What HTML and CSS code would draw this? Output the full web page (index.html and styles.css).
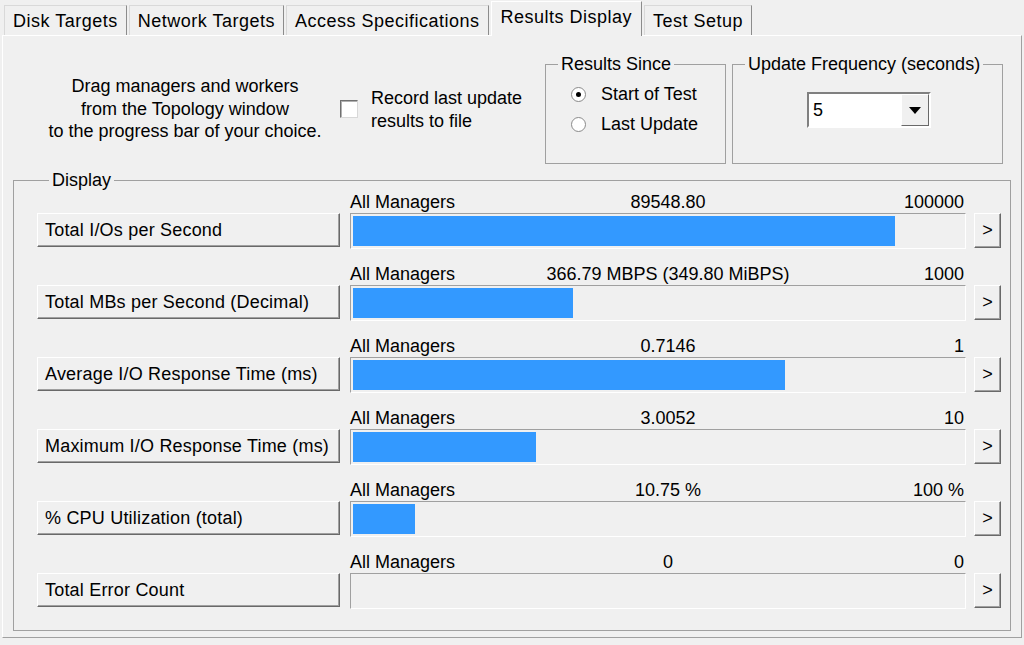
FILE: index.html
```html
<!DOCTYPE html>
<html lang="en">
<head>
    <meta charset="UTF-8">
    <title>Results Display</title>
    <link rel="stylesheet" href="styles.css">
</head>
<body>

<div class="tabs">
    <div class="tab">Disk Targets</div>
    <div class="tab">Network Targets</div>
    <div class="tab">Access Specifications</div>
    <div class="tab active">Results Display</div>
    <div class="tab">Test Setup</div>
</div>

<div class="panel">

    <div class="top">
        <p class="hint">Drag managers and workers<br>from the Topology window<br>to the progress bar of your choice.</p>

        <label class="record">
            <span class="checkbox"></span>
            <span>Record last update<br>results to file</span>
        </label>

        <fieldset class="group since">
            <legend>Results Since</legend>
            <div class="radio-row"><span class="radio checked"></span>Start of Test</div>
            <div class="radio-row"><span class="radio"></span>Last Update</div>
        </fieldset>

        <fieldset class="group freq">
            <legend>Update Frequency (seconds)</legend>
            <div class="combo">
                <span class="combo-value">5</span>
                <span class="combo-btn"><svg width="12" height="7" viewBox="0 0 12 7"><path d="M0 0h12L6 7z" fill="#000"/></svg></span>
            </div>
        </fieldset>
    </div>

    <fieldset class="group display">
        <legend>Display</legend>

        <div class="row">
            <button class="metric">Total I/Os per Second</button>
            <div class="meter">
                <div class="meter-labels"><span>All Managers</span><span class="mid">89548.80</span><span class="max">100000</span></div>
                <div class="bar"><div class="fill" style="width:88.9%"></div></div>
            </div>
            <button class="more">&gt;</button>
        </div>

        <div class="row">
            <button class="metric">Total MBs per Second (Decimal)</button>
            <div class="meter">
                <div class="meter-labels"><span>All Managers</span><span class="mid">366.79 MBPS (349.80 MiBPS)</span><span class="max">1000</span></div>
                <div class="bar"><div class="fill" style="width:36%"></div></div>
            </div>
            <button class="more">&gt;</button>
        </div>

        <div class="row">
            <button class="metric">Average I/O Response Time (ms)</button>
            <div class="meter">
                <div class="meter-labels"><span>All Managers</span><span class="mid">0.7146</span><span class="max">1</span></div>
                <div class="bar"><div class="fill" style="width:70.8%"></div></div>
            </div>
            <button class="more">&gt;</button>
        </div>

        <div class="row">
            <button class="metric">Maximum I/O Response Time (ms)</button>
            <div class="meter">
                <div class="meter-labels"><span>All Managers</span><span class="mid">3.0052</span><span class="max">10</span></div>
                <div class="bar"><div class="fill" style="width:30%"></div></div>
            </div>
            <button class="more">&gt;</button>
        </div>

        <div class="row">
            <button class="metric">% CPU Utilization (total)</button>
            <div class="meter">
                <div class="meter-labels"><span>All Managers</span><span class="mid">10.75 %</span><span class="max">100 %</span></div>
                <div class="bar"><div class="fill" style="width:10.2%"></div></div>
            </div>
            <button class="more">&gt;</button>
        </div>

        <div class="row">
            <button class="metric">Total Error Count</button>
            <div class="meter">
                <div class="meter-labels"><span>All Managers</span><span class="mid">0</span><span class="max">0</span></div>
                <div class="bar"><div class="fill" style="width:0"></div></div>
            </div>
            <button class="more">&gt;</button>
        </div>
    </fieldset>

</div>

</body>
</html>
```

FILE: styles.css
```css
body {
    margin: 0;
    width: 1024px;
    height: 645px;
    overflow: hidden;
    background-color: #f0f0f0;
    font-family: "Liberation Sans", Arial, sans-serif;
    font-size: 18px;
    color: #000;
}

/* tab strip */
.tabs {
    display: flex;
    align-items: flex-end;
    height: 35px;
    padding-left: 4px;
    position: relative;
    z-index: 1;
}
.tab {
    height: 29px;
    line-height: 30px;
    padding: 0 8px;
    margin-right: 2px;
    letter-spacing: 0.5px;
    border: 1px solid #d9d9d9;
    border-right-color: #8c8c8c;
    border-bottom: none;
    background-color: #f0f0f0;
    white-space: nowrap;
}
.tab.active {
    height: 34px;
    line-height: 30px;
    margin-bottom: -1px;
    padding: 0 9px;
    border-color: #fff;
    border-right-color: #8c8c8c;
}

.panel {
    height: 601px;
    margin: 0 2px;
    border: 1px solid;
    border-color: #fff #a0a0a0 #a0a0a0 #fff;
}

/* upper options */
.top {
    display: flex;
    align-items: flex-start;
    height: 133px;
}
.hint {
    width: 306px;
    margin: 39px 0 0 29px;
    line-height: 22.5px;
    text-align: center;
}
.record {
    display: flex;
    align-items: flex-start;
    gap: 13px;
    width: 205px;
    margin-left: 2px;
    line-height: 23px;
}
.record span:last-child {
    margin-top: 51px;
}
.checkbox {
    width: 16px;
    height: 16px;
    margin-top: 64px;
    background-color: #fff;
    border: 1px solid;
    border-color: #707070 #d8d8d8 #d8d8d8 #707070;
    box-shadow: inset 1px 1px #b0b0b0;
}

.group {
    margin: 0;
    padding: 0;
    min-width: 0;
    border: 1px solid #a0a0a0;
}
.group legend {
    padding: 0 3px;
    line-height: 22px;
}
.since, .freq {
    margin-top: 17px;
    height: 111px;
    box-sizing: border-box;
}
.since {
    width: 181px;
    padding: 4px 0 0 25px;
}
.since legend {
    margin-left: -13px;
}
.freq {
    width: 271px;
    margin-left: 6px;
}
.freq legend {
    margin-left: 12px;
}
.radio-row {
    display: flex;
    align-items: center;
    height: 30px;
    gap: 15px;
}
.radio {
    width: 13px;
    height: 13px;
    border-radius: 50%;
    border: 1px solid #8a8a8a;
    background-color: #fff;
    position: relative;
}
.radio.checked::after {
    content: "";
    position: absolute;
    left: 4px;
    top: 4px;
    width: 5px;
    height: 5px;
    border-radius: 50%;
    background-color: #000;
}

.combo {
    display: flex;
    width: 120px;
    height: 32px;
    margin: 17px 0 0 74px;
    border: 2px solid;
    border-color: #808080 #fff #fff #808080;
    background-color: #fff;
}
.combo-value {
    flex: 1;
    padding-left: 4px;
    line-height: 32px;
}
.combo-btn {
    display: flex;
    align-items: center;
    justify-content: center;
    width: 26px;
    background-color: #f0f0f0;
    border: 1px solid;
    border-color: #fff #696969 #696969 #fff;
}

/* display rows */
.display {
    width: 998px;
    height: 462px;
    box-sizing: border-box;
    margin-left: 10px;
    padding: 1px 0 0 23px;
}
.display legend {
    margin-left: 12px;
}
.row {
    display: flex;
    align-items: flex-end;
    margin-bottom: 15px;
}
.metric {
    width: 303px;
    height: 34px;
    margin: 0 10px 2px 0;
    padding: 0 0 0 7px;
    text-align: left;
    font: inherit;
    letter-spacing: 0.2px;
    color: #000;
    background-color: #f0f0f0;
    border: 1px solid;
    border-color: #fff #696969 #696969 #fff;
    box-shadow: inset -1px -1px #a0a0a0;
}
.meter {
    width: 616px;
}
.meter-labels {
    display: grid;
    grid-template-columns: 1fr auto 1fr;
    line-height: 20px;
    height: 20px;
    margin-bottom: 1px;
    white-space: nowrap;
}
.meter-labels .mid {
    padding-left: 20px;
}
.meter-labels .max {
    text-align: right;
    padding-right: 2px;
}
.bar {
    height: 30px;
    padding: 2px;
    border: 1px solid;
    border-color: #a0a0a0 #fff #fff #a0a0a0;
}
.fill {
    height: 100%;
    background-color: #3399ff;
}
.more {
    width: 27px;
    height: 35px;
    margin: 0 0 1px 8px;
    padding: 0;
    font: inherit;
    color: #000;
    background-color: #f0f0f0;
    border: 1px solid;
    border-color: #fff #696969 #696969 #fff;
    box-shadow: inset -1px -1px #a0a0a0;
}
```
